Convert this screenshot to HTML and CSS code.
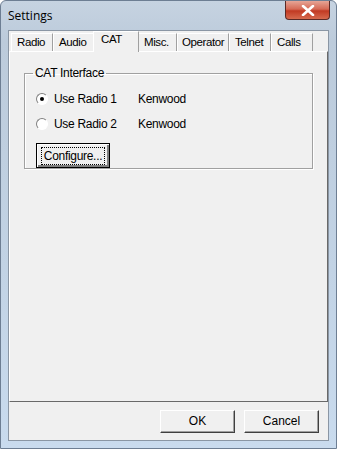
FILE: index.html
```html
<!DOCTYPE html>
<html lang="en">
<head>
    <meta charset="UTF-8">
    <title>Settings</title>
    <link rel="stylesheet" href="styles.css">
</head>
<body>
    <div class="window">
        <div class="titlebar">
            <span class="title">Settings</span>
            <div class="close">
                <svg width="14" height="11" viewBox="0 0 14 11">
                    <path d="M2 1 L12 10 M12 1 L2 10" stroke="#ffffff" stroke-width="2.6" stroke-linecap="round"/>
                </svg>
            </div>
        </div>
        <div class="client">
            <div class="tabs">
                <div class="tab w42">Radio</div>
                <div class="tab w41">Audio</div>
                <div class="tab active">CAT</div>
                <div class="tab w39">Misc.</div>
                <div class="tab w52">Operator</div>
                <div class="tab w42">Telnet</div>
                <div class="tab w42">Calls</div>
            </div>
            <div class="panel">
                <fieldset class="group">
                    <legend>CAT Interface</legend>
                    <div class="row">
                        <span class="radio checked"></span>
                        <span class="label">Use Radio 1</span>
                        <span class="value">Kenwood</span>
                    </div>
                    <div class="row">
                        <span class="radio"></span>
                        <span class="label">Use Radio 2</span>
                        <span class="value">Kenwood</span>
                    </div>
                    <button class="btn configure"><span class="focus">Configure...</span></button>
                </fieldset>
            </div>
            <div class="footer">
                <button class="btn">OK</button>
                <button class="btn">Cancel</button>
            </div>
        </div>
    </div>
</body>
</html>
```

FILE: styles.css
```css
body {
    margin: 0;
    font-family: "Liberation Sans", Arial, sans-serif;
    font-size: 11px;
    color: #000;
}

.window {
    width: 337px;
    height: 449px;
    box-sizing: border-box;
    display: flex;
    flex-direction: column;
    border: 1px solid #6d7e93;
    border-radius: 6px 6px 0 0;
    background: linear-gradient(to bottom, #c6d3e1 0%, #bccbdb 40px, #c2d3e5 60%, #c9dbee 100%);
}

.titlebar {
    height: 29px;
    display: flex;
    align-items: flex-start;
    justify-content: space-between;
    flex-shrink: 0;
}

.title {
    font-family: "Open Sans", "Noto Sans", sans-serif;
    font-size: 12px;
    margin: 6px 0 0 7px;
}

.close {
    width: 43px;
    height: 18px;
    margin-right: 6px;
    border: 1px solid #5a2a26;
    border-top: none;
    border-radius: 0 0 4px 4px;
    background: linear-gradient(to bottom, #e6a596 0%, #d56a56 45%, #c13a23 55%, #d66a4e 100%);
    display: flex;
    align-items: center;
    justify-content: center;
}

.client {
    flex: 1;
    margin: 0 7px 7px 7px;
    background: #f0f0f0;
    border: 1px solid #8a96a4;
    display: flex;
    flex-direction: column;
}

.tabs {
    display: flex;
    height: 20px;
    padding: 0 0 0 2px;
    align-items: flex-end;
    position: relative;
    z-index: 1;
}

.tab {
    box-sizing: border-box;
    height: 18px;
    line-height: 17px;
    padding: 0 0 0 5px;
    border: 1px solid #fff;
    border-right-color: #a0a0a0;
    border-bottom: none;
    background: #f0f0f0;
    font-size: 11.5px;
    letter-spacing: -0.4px;
    white-space: nowrap;
    overflow: hidden;
}

.w39 { width: 39px; }
.w41 { width: 41px; }
.w42 { width: 42px; }
.w52 { width: 52px; padding-left: 4px; }

.tab.active {
    width: 46px;
    height: 21px;
    line-height: 15px;
    margin: 0 -1px -1px -1px;
    padding-left: 7px;
    z-index: 2;
    position: relative;
}

.panel {
    flex: 1;
    border: 1px solid #fff;
    border-right-color: #696969;
    border-bottom-color: #696969;
    padding: 14px 14px 0 14px;
}

.group {
    margin: 0;
    height: 95px;
    border: 1px solid #a0a0a0;
    box-shadow: inset 1px 1px 0 #fff, 1px 1px 0 #fff;
    padding: 6px 0 0 11px;
}

.group legend {
    padding: 0 2px;
    margin-left: -3px;
    font-size: 12px;
    letter-spacing: -0.3px;
}

.row {
    display: flex;
    align-items: center;
    height: 25px;
    font-size: 12px;
    letter-spacing: -0.3px;
}

.radio {
    width: 12px;
    height: 12px;
    border-radius: 50%;
    border: 1px solid;
    border-color: #808080 #fff #fff #808080;
    background: #fff;
    box-sizing: border-box;
    position: relative;
    margin-right: 6px;
}

.radio.checked::after {
    content: "";
    position: absolute;
    left: 3px;
    top: 3px;
    width: 4px;
    height: 4px;
    border-radius: 50%;
    background: #000;
}

.label {
    width: 84px;
}

.btn {
    font-family: "Liberation Sans", Arial, sans-serif;
    font-size: 12px;
    width: 75px;
    height: 23px;
    background: #f0f0f0;
    border: 1px solid;
    border-color: #fff #404040 #404040 #fff;
    box-shadow: inset -1px -1px 0 #a0a0a0;
    padding: 0;
}

.configure {
    margin-top: 7px;
    border: 1px solid #000;
    box-shadow: inset 1px 1px 0 #fff, inset -2px -2px 0 #808080;
    width: 74px;
    height: 25px;
    letter-spacing: -0.3px;
}

.focus {
    display: inline-block;
    border: 1px dotted #000;
    padding: 1px 2px;
}

.footer {
    height: 38px;
    flex-shrink: 0;
    display: flex;
    justify-content: flex-end;
    align-items: center;
    gap: 9px;
    padding-right: 9px;
}
```
